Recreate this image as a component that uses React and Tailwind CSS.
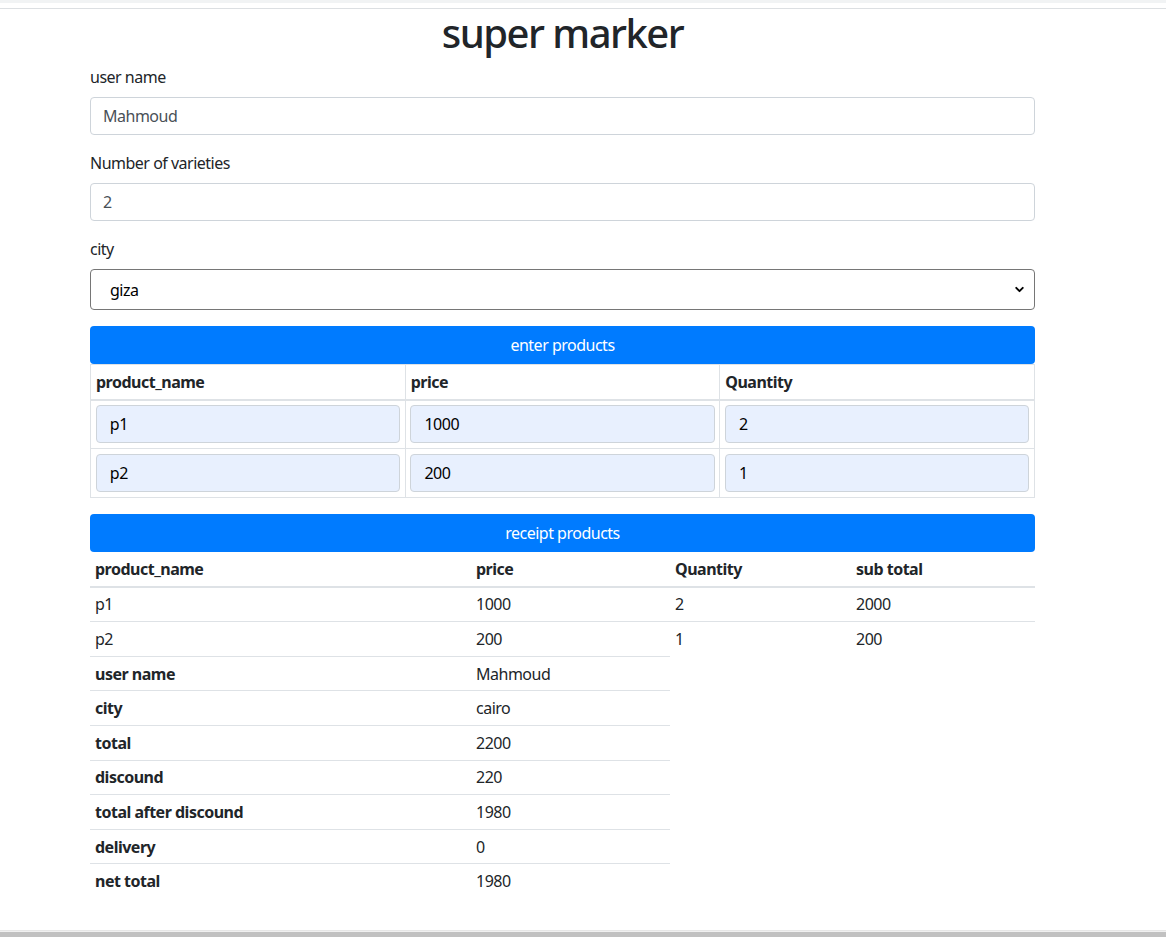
import { useState } from "react";
import { ChevronDown } from "lucide-react";

const font = { fontFamily: '"Noto Sans", "Open Sans", sans-serif' };

const FormGroup = ({ label, value }) => (
  <div className="mb-4">
    <label className="block mb-2 text-base leading-6 text-[#212529]">{label}</label>
    <input
      type="text"
      defaultValue={value}
      className="block w-full h-[38px] px-3 border border-[#ced4da] rounded text-base tracking-[-0.5px] text-[#495057] outline-none"
    />
  </div>
);

const products = [
  { name: "p1", price: 1000, qty: 2 },
  { name: "p2", price: 200, qty: 1 },
];

const summary = [
  ["user name", "Mahmoud"],
  ["city", "cairo"],
  ["total", "2200"],
  ["discound", "220"],
  ["total after discound", "1980"],
  ["delivery", "0"],
  ["net total", "1980"],
];

export default function App() {
  const [city, setCity] = useState("giza");

  return (
    <div className="h-[937px] flex flex-col bg-white text-[#212529] tracking-[-0.5px]" style={font}>
      {/* browser chrome strips */}
      <div className="h-[3px] bg-[#f1f3f4]" />
      <div className="h-[5px] bg-white" />
      <div className="h-px bg-[#dcdfe2]" />

      <div className="flex-1">
        <div className="w-[945px] ml-[90px]">
          <h1 className="text-[40px] leading-[48px] font-medium text-center tracking-[-1.5px] mb-2">super marker</h1>

          <FormGroup label="user name" value="Mahmoud" />
          <FormGroup label="Number of varieties" value="2" />

          <div className="mb-4">
            <label className="block mb-2 text-base leading-6">city</label>
            <div className="relative">
              <select
                value={city}
                onChange={(e) => setCity(e.target.value)}
                className="block w-full h-[41px] pl-[19px] pr-8 border border-[#767676] rounded-sm appearance-none bg-white text-base tracking-[-0.5px] text-black outline-none"
              >
                <option value="giza">giza</option>
                <option value="cairo">cairo</option>
              </select>
              <ChevronDown
                size={13}
                strokeWidth={3.5}
                className="absolute right-[9px] top-[14px] text-black pointer-events-none"
              />
            </div>
          </div>

          {/* enter products */}
          <button className="block w-full h-[38px] bg-[#007bff] text-white text-base leading-6 tracking-[-0.5px] rounded">
            enter products
          </button>
          <table className="w-full table-fixed border-collapse border border-[#dee2e6] mb-4">
            <thead>
              <tr>
                <th className="text-left font-bold px-[5px] py-[4.8px] leading-6 border border-[#dee2e6] border-b-2">product_name</th>
                <th className="text-left font-bold px-[5px] py-[4.8px] leading-6 border border-[#dee2e6] border-b-2">price</th>
                <th className="text-left font-bold px-[5px] py-[4.8px] leading-6 border border-[#dee2e6] border-b-2">Quantity</th>
              </tr>
            </thead>
            <tbody>
              {products.map((p) => (
                <tr key={p.name}>
                  {[p.name, p.price, p.qty].map((v, i) => (
                    <td key={i} className="p-[4.8px] border border-[#dee2e6]">
                      <input
                        type="text"
                        defaultValue={v}
                        className="block w-full h-[38px] px-[13px] bg-[#e8f0fe] border border-[#ced4da] rounded text-base tracking-[-0.5px] text-black outline-none"
                      />
                    </td>
                  ))}
                </tr>
              ))}
            </tbody>
          </table>

          {/* receipt products */}
          <button className="block w-full h-[38px] bg-[#007bff] text-white text-base leading-6 tracking-[-0.5px] rounded">
            receipt products
          </button>
          <table className="w-full border-collapse">
            <colgroup>
              <col className="w-[381px]" />
              <col className="w-[199px]" />
              <col className="w-[181px]" />
              <col className="w-[184px]" />
            </colgroup>
            <thead>
              <tr>
                {["product_name", "price", "Quantity", "sub total"].map((h) => (
                  <th key={h} className="text-left font-bold px-[5px] pt-[5px] pb-[4.8px] leading-6 border-b-2 border-[#dee2e6]">
                    {h}
                  </th>
                ))}
              </tr>
            </thead>
            <tbody>
              {products.map((p, idx) => (
                <tr key={p.name}>
                  {[p.name, p.price, p.qty, p.price * p.qty].map((v, i) => (
                    <td
                      key={i}
                      className={`px-[5px] py-[4.8px] leading-6 ${idx > 0 ? "border-t border-[#dee2e6]" : ""}`}
                    >
                      {v}
                    </td>
                  ))}
                </tr>
              ))}
              {summary.map(([k, v]) => (
                <tr key={k}>
                  <th className="text-left font-bold px-[5px] py-[4.8px] leading-6 border-t border-[#dee2e6]">{k}</th>
                  <td className="px-[5px] py-[4.8px] leading-6 border-t border-[#dee2e6]">{v}</td>
                </tr>
              ))}
            </tbody>
          </table>
        </div>
      </div>

      {/* bottom strips */}
      <div className="h-px bg-[#e6e6e6]" />
      <div className="h-px bg-[#f0f0f0]" />
      <div className="h-[5px] bg-[#c1c1c1]" />
    </div>
  );
}
